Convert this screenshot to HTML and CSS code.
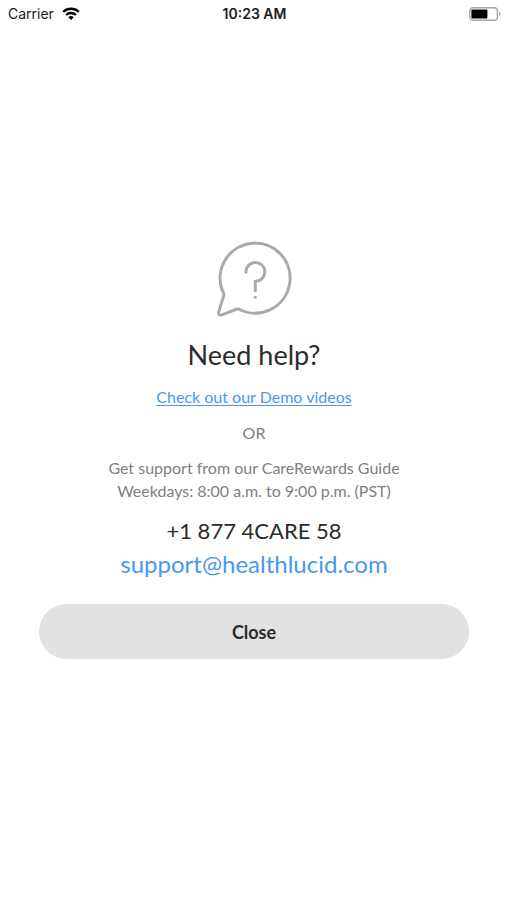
FILE: index.html
```html
<!DOCTYPE html>
<html lang="en">
<head>
<meta charset="utf-8">
<meta name="viewport" content="width=device-width, initial-scale=1">
<title>Need help?</title>
<link rel="stylesheet" href="styles.css">
</head>
<body>
<header class="status">
  <div class="carrier">
    <span>Carrier</span>
    <svg width="18" height="14" viewBox="0 0 18 14" fill="none" stroke="#000" stroke-width="2.3" aria-hidden="true">
      <path d="M1.2 4.9A11.2 11.2 0 0 1 16.8 4.9"/>
      <path d="M4.1 8A7 7 0 0 1 13.9 8"/>
      <path d="M9 12.9L6.3 10.2A3.9 3.9 0 0 1 11.7 10.2Z" fill="#000" stroke="none"/>
    </svg>
  </div>
  <time class="clock">10:23 AM</time>
  <svg class="battery" width="32" height="14" viewBox="0 0 32 14" aria-hidden="true">
    <rect x="0.8" y="0.8" width="27.6" height="12.4" rx="3.2" fill="#fff" stroke="#a6a6a6" stroke-width="1.4"/>
    <rect x="2.4" y="2.4" width="16" height="9.2" rx="1" fill="#000"/>
    <path d="M30 4.8Q31.6 5.4 31.6 7T30 9.2Z" fill="#a6a6a6"/>
  </svg>
</header>
<main class="help">
  <svg class="bubble" width="78" height="76" viewBox="-2 0 78 76" fill="none" stroke="#aaa" stroke-width="3" stroke-linecap="round" stroke-linejoin="round" aria-hidden="true">
    <path d="M6.7 52.6A35 35 0 1 1 21.6 68Q20.8 67.8 20 68L4.8 73.9Q1 74.7 1.6 71.2L6.8 54.4Q7.1 53.4 6.7 52.6Z"/>
    <path d="M29 31.2A9.4 9.4 0 1 1 38.3 40.2V49.8"/>
    <circle cx="38.3" cy="56.2" r="1.5" fill="#aaa" stroke="none"/>
  </svg>
  <h1 class="title">Need help?</h1>
  <a class="demo" href="#videos">Check out our Demo videos</a>
  <p class="or">OR</p>
  <p class="info">Get support from our CareRewards Guide<br>Weekdays: 8:00 a.m. to 9:00 p.m. (PST)</p>
  <a class="contact phone" href="tel:+18774227358">+1 877 4CARE 58</a>
  <a class="contact email" href="mailto:support@healthlucid.com">support@healthlucid.com</a>
  <button class="close" type="button">Close</button>
</main>
</body>
</html>
```
FILE: styles.css
```css
* { box-sizing: border-box; }

body {
  display: flex;
  flex-direction: column;
  min-height: 100vh;
  margin: 0;
  background: #fff;
  color: #2b2b2b;
  font-family: Lato, sans-serif;
}

.status {
  display: grid;
  grid-template-columns: 1fr auto 1fr;
  align-items: center;
  height: 28px;
  padding: 0 6px 0 8px;
  color: #1a1a1a;
  font: 14px/20px Inter, sans-serif;
}

.carrier {
  display: flex;
  align-items: center;
  gap: 8px;
}

.clock { font-weight: 600; }

.battery { justify-self: end; }

.help {
  display: flex;
  flex: 1;
  flex-direction: column;
  align-items: center;
  justify-content: center;
  padding: 0 38px 28px 39px;
  text-align: center;
}

.title {
  margin: 20px 0 12px;
  font-size: 27px;
  font-weight: 400;
  line-height: 36px;
}

.demo {
  color: #4a98ee;
  font-size: 16px;
  line-height: 24px;
  text-underline-offset: 2px;
}

.or,
.info {
  margin: 12px 0 0;
  color: #808080;
  font-size: 16px;
  line-height: 23px;
}

.contact {
  font-size: 24px;
  line-height: 33px;
  text-decoration: none;
}

.phone {
  margin-top: 12px;
  color: #2b2b2b;
  font-size: 22px;
}

.email { color: #4a98ee; }

.close {
  width: 100%;
  height: 55px;
  margin-top: 24px;
  border: 0;
  border-radius: 28px;
  background: #e2e2e2;
  color: #2b2b2b;
  font: 700 18px/24px Lato, sans-serif;
}
```
